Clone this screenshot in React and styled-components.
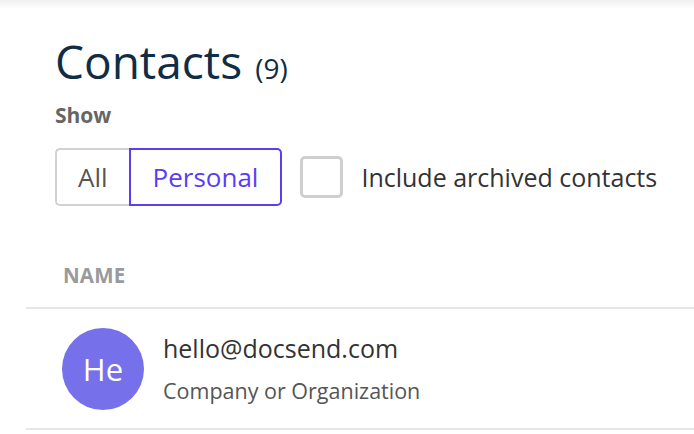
import React, { useState } from "react";
import styled, { createGlobalStyle } from "styled-components";

const GlobalStyle = createGlobalStyle`
	html, body {
		margin: 0;
		padding: 0;
		background: #fff;
		font-family: "Open Sans", "Noto Sans", sans-serif;
		overflow: hidden;
	}
`;

const Page = styled.div`
	width: 694px;
	height: 434px;
	overflow: hidden;
	background: linear-gradient(#efefef, #fff 9px);
`;

const Header = styled.div`
	padding: 30px 0 0 55px;
`;

const Title = styled.h1`
	margin: 0;
	font-size: 46px;
	font-weight: 400;
	line-height: 62px;
	color: #0f2d45;

	small {
		font-size: 28px;
		line-height: 1;
		margin-left: 1px;
	}
`;

const ShowLabel = styled.div`
	margin-top: 9px;
	font-size: 21px;
	font-weight: 700;
	color: #666;
	line-height: 28px;
`;

const FilterRow = styled.div`
	display: flex;
	align-items: center;
	margin-top: 19px;
`;

const Segmented = styled.div`
	display: flex;
	height: 58px;
`;

const Segment = styled.button`
	font-family: inherit;
	font-size: 26px;
	height: 58px;
	box-sizing: border-box;
	padding: 0 ${(p) => (p.$first ? 21 : 22)}px;
	background: #fff;
	cursor: pointer;
	color: ${(p) => (p.$active ? "#5a3ef2" : "#555")};
	font-weight: ${(p) => (p.$active ? 500 : 400)};
	border: 2px solid ${(p) => (p.$active ? "#5a3ef2" : "#d2d2d2")};
	border-radius: ${(p) => (p.$first ? "5px 0 0 5px" : "0 5px 5px 0")};
	${(p) => p.$first && "border-right: none;"}
`;

const CheckLabel = styled.label`
	display: flex;
	align-items: center;
	margin-left: 18px;
	font-size: 25px;
	color: #333;
	cursor: pointer;
`;

const Box = styled.span`
	width: 43px;
	height: 42px;
	box-sizing: border-box;
	border: 3px solid #cfcfcf;
	border-radius: 5px;
	margin-right: 18px;
	background: ${(p) => (p.$checked ? "#5a3ef2" : "#fff")};
`;

const Table = styled.div`
	margin: 56px 0 0 26px;
`;

const HeadCell = styled.div`
	padding: 0 0 19px 37px;
	font-size: 20.5px;
	font-weight: 700;
	letter-spacing: 0.2px;
	color: #9a9a9a;
	text-transform: uppercase;
	border-bottom: 2px solid #e6e6e6;
	line-height: 26px;
`;

const Row = styled.div`
	display: flex;
	align-items: center;
	padding: 19px 0 18px 36px;
	border-bottom: 2px solid #e6e6e6;
`;

const Avatar = styled.div`
	width: 82px;
	height: 82px;
	border-radius: 50%;
	background: #7671ea;
	color: #fff;
	font-size: 31px;
	display: flex;
	align-items: center;
	justify-content: center;
	flex-shrink: 0;
`;

const Info = styled.div`
	margin-left: 19px;
	display: flex;
	flex-direction: column;
	gap: 14px;
`;

const Email = styled.div`
	font-size: 25px;
	color: #333;
	line-height: 30px;
`;

const Company = styled.div`
	font-size: 21.5px;
	color: #555;
	line-height: 28px;
`;

export default function App() {
	const [filter, setFilter] = useState("personal");
	const [archived, setArchived] = useState(false);

	return (
		<Page>
			<GlobalStyle />
			<Header>
				<Title>
					Contacts <small>(9)</small>
				</Title>
				<ShowLabel>Show</ShowLabel>
				<FilterRow>
					<Segmented>
						<Segment $first $active={filter === "all"} onClick={() => setFilter("all")}>
							All
						</Segment>
						<Segment $active={filter === "personal"} onClick={() => setFilter("personal")}>
							Personal
						</Segment>
					</Segmented>
					<CheckLabel onClick={() => setArchived(!archived)}>
						<Box $checked={archived} />
						Include archived contacts
					</CheckLabel>
				</FilterRow>
			</Header>
			<Table>
				<HeadCell>Name</HeadCell>
				<Row>
					<Avatar>He</Avatar>
					<Info>
						<Email>hello@docsend.com</Email>
						<Company>Company or Organization</Company>
					</Info>
				</Row>
			</Table>
		</Page>
	);
}
